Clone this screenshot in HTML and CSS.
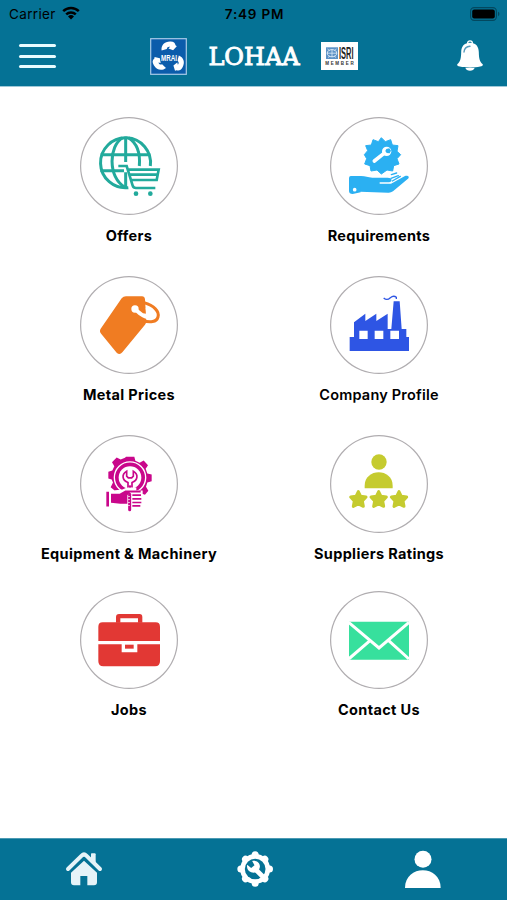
FILE: index.html
```html
<!DOCTYPE html>
<html lang="en">
<head>
    <meta charset="UTF-8">
    <meta name="viewport" content="width=device-width, initial-scale=1.0">
    <title>LOHAA</title>
    <link rel="stylesheet" href="styles.css">
</head>
<body>
    <header class="header">
        <div class="status">
            <div class="carrier">
                <span>Carrier</span>
                <svg class="wifi" viewBox="0 0 18 14">
                    <path d="M1.2 5.2a11.2 11.2 0 0 1 15.6 0M4.2 8.3a7 7 0 0 1 9.6 0" fill="none" stroke="#000" stroke-width="2.5"/>
                    <path d="M9 13.5l-3-3.1a4.3 4.3 0 0 1 6 0z"/>
                </svg>
            </div>
            <span class="time">7:49 PM</span>
            <svg class="battery" viewBox="0 0 30 14">
                <rect x=".6" y=".6" width="25.8" height="12.8" rx="3.6" fill="none" stroke="#03485f" stroke-width="1.1"/>
                <rect x="2.2" y="2.4" width="22.6" height="9.2" rx="2"/>
                <path d="M28 4.8a2.4 2.4 0 0 1 0 4.4z" fill="#03485f"/>
            </svg>
        </div>
        <nav class="nav">
            <div class="menu"><span></span><span></span><span></span></div>
            <div class="brand">
                <svg class="mrai" viewBox="0 0 37 37">
                    <rect x=".7" y=".7" width="35.6" height="35.6" fill="#0b5cab" stroke="#a9cbe8" stroke-width="1.2"/>
                    <g fill="#fff">
                        <path d="M11.6 12.6C10.8 7 14.5 3.6 20 3.4c3.5-.2 5.2 1.4 5.5 3.8l1.3 1-3.7 4-4.6-1.8 1.6-1.6c-2-.3-3 .4-3.3 2.3z"/>
                        <path d="M11.6 12.6C10.8 7 14.5 3.6 20 3.4c3.5-.2 5.2 1.4 5.5 3.8l1.3 1-3.7 4-4.6-1.8 1.6-1.6c-2-.3-3 .4-3.3 2.3z" transform="rotate(120 18.8 20)"/>
                        <path d="M11.6 12.6C10.8 7 14.5 3.6 20 3.4c3.5-.2 5.2 1.4 5.5 3.8l1.3 1-3.7 4-4.6-1.8 1.6-1.6c-2-.3-3 .4-3.3 2.3z" transform="rotate(240 18.8 20)"/>
                    </g>
                    <text x="11" y="22.6" textLength="16" lengthAdjust="spacingAndGlyphs" class="mrai-text">MRAI</text>
                </svg>
                <h1 class="title">LOHAA</h1>
                <svg class="isri" viewBox="0 0 37 28">
                    <rect width="37" height="28" fill="#fff"/>
                    <rect x="5" y="5.3" width="12" height="11.7" fill="#5d92c6"/>
                    <ellipse cx="11" cy="11.2" rx="4.8" ry="3.6" fill="none" stroke="#dcebf7"/>
                    <path d="M6 11.2h10M11 7.6v7.2M6.5 7l2 1.5M15.5 7l-2 1.5M7 15.5l2-1.5M15 15.5l-2-1.5" stroke="#dcebf7" stroke-width=".8"/>
                    <text x="18" y="17" textLength="14.5" lengthAdjust="spacingAndGlyphs" class="isri-text">ISRI</text>
                    <text x="4.2" y="22.8" textLength="28.5" class="isri-sub">MEMBER</text>
                </svg>
            </div>
            <svg class="bell" viewBox="0 0 26 32">
                <circle cx="13" cy="3.2" r="2.4" fill="none" stroke="#fff" stroke-width="1.3"/>
                <path d="M13 2.8c6 0 8.6 3.8 8.8 9.2.2 6 .5 9.6 4 12.2.3 1.6-1.2 2-2.6 2.3-6 1.2-14.4 1.2-20.4 0C1.4 26.2-.1 25.8.2 24.2c3.5-2.6 3.8-6.2 4-12.2C4.4 6.600 7 2.800 13 2.800z" fill="#fff"/>
                <path d="M8.3 27.8c.9 3.900 8.500 3.900 9.400 0z" fill="#fff"/>
                <path d="M7 12c.3-3.3 2.4-5.6 6-5.8" fill="none" stroke="#5a9dbd" stroke-width="1.4" stroke-linecap="round"/>
            </svg>
        </nav>
    </header>

    <main class="grid">
        <a class="item">
            <svg class="icon" viewBox="30 21 294 294">
                <g fill="none" stroke="#22aa9c" stroke-width="9">
                    <path d="M241 168a75 75 0 1 0-66 65"/>
                    <path d="M167 80v76M167 187v46M92 134h149M91 182h71"/>
                    <path d="M158 83C116 108 113 197 164 232M175 83c28 17 36 50 33 85"/>
                    <path d="M145 168h25l18 59q2 7 10 7h58M175 179h91l-6 31h-74M180 194h83" stroke-width="8"/>
                </g>
                <circle cx="198" cy="251" r="7" fill="#22aa9c"/>
                <circle cx="241" cy="251" r="7" fill="#22aa9c"/>
            </svg>
            <span class="label">Offers</span>
        </a>
        <a class="item">
            <svg class="icon" viewBox="30 21 294 294">
                <path d="M184 83l12 12 16-6 5 16 17 2-3 17 11 10-11 12 6 16-16 5-3 16-17-3-17 12-13-12-18 3-3-16-16-5 6-16-7-12 10-12-6-15 17-2 5-16 16 6z" fill="#2bb0f2" stroke="#2bb0f2" stroke-width="3" stroke-linejoin="round"/>
                <path d="M163 153l29-23" stroke="#fff" stroke-width="11" stroke-linecap="round"/>
                <circle cx="200" cy="124" r="14" fill="#fff"/>
                <path d="M199 117l9-2 5 7-4 8-9-1-4-6z" fill="#2bb0f2"/>
                <path d="M92 198h31c14 0 20 4 34 5h46c14 0 16 11 4 14h-28v4h34l42-23c8-3 16 3 8 9l-44 37q-7 5-15 4l-83-3-24 4-5-25z" fill="#2bb0f2"/>
                <path d="M87 203q0-5 6-5h24l5 49-24 5q-11 0-11-9z" fill="#2bb0f2"/>
                <path d="M213 205l22-8M217 213l24-14M214 194l16-5" stroke="#2bb0f2" stroke-width="4" stroke-linecap="round"/>
                <circle cx="104" cy="239" r="5.5" fill="#fff"/>
            </svg>
            <span class="label">Requirements</span>
        </a>
        <a class="item">
            <svg class="icon" viewBox="30 18 294 294">
                <path d="M168 79h48q8 0 9 9l4 64q0 7-4 12l-68 83q-8 9-17 1l-46-56q-7-8-2-16l63-91q5-6 13-6z" fill="#f07c22"/>
                <path d="M222 98c30 9 47 26 42 43-4 15-24 18-46 10" fill="none" stroke="#f07c22" stroke-width="9"/>
                <circle cx="195" cy="117" r="11" fill="#fff"/>
                <path d="M196 125c12 15 41 28 52 22 9-7 1-20-21-33l2 17-10-1-16-13z" fill="#fff"/>
            </svg>
            <span class="label">Metal Prices</span>
        </a>
        <a class="item">
            <svg class="icon" viewBox="60 18 294 294">
                <path d="M119 201h13v-44l34-26v22l33-22v22l34-22v46h11l7-83h18l6 83h14v24h8v42H119z" fill="#2e55e4"/>
                <path d="M148 182h25v25h-25zM194 182h26v25h-26zM241 182h26v25h-26z" fill="#fff"/>
                <path d="M221 84q10 9 20-1 10-8 18-1v5" fill="none" stroke="#2e55e4" stroke-width="4"/>
            </svg>
            <span class="label company">Company Profile</span>
        </a>
        <a class="item">
            <svg class="icon" viewBox="151 13.5 294 294">
                <path d="M289 79h25l3 12 13 6 12-7 13 14-7 11 5 14 13 3v20l-13 4-4 13 7 12-10 12-13-5-8 4h-54l-20-5 3-8-11-9 7-14-4-9-10-3v-20l12-4 6-13-7-12 14-14 12 6 13-5z" fill="#c9078b"/>
                <circle cx="301" cy="141" r="47" fill="none" stroke="#fff" stroke-width="4"/>
                <circle cx="301" cy="141" r="34" fill="#fff"/>
                <path d="M291 122c-16 9-14 28 4 34v20h12v-20c18-6 20-25 4-34v15l-5 5h-10l-5-5z" fill="#fff" stroke="#c9078b" stroke-width="5"/>
                <path d="M226 181h16l36-4q15-8 30-6h12v9h19v62h-46l-57-7h-10z" fill="#fff"/>
                <circle cx="301" cy="168" r="4" fill="#c9078b"/>
                <path d="M230 184h8v44h-8zM244 190h26l17-10h46v6h-32l-8 8v26h-21l-28-3z" fill="#c9078b"/>
                <path d="M300 191v47" stroke="#c9078b" stroke-width="9" stroke-linecap="round"/>
                <path d="M296 198h4M296 207h4M296 216h4M296 225h4" stroke="#fff" stroke-width="3"/>
                <path d="M308 194h26M308 205h27M308 216h27M308 226h24" stroke="#c9078b" stroke-width="5"/>
            </svg>
            <span class="label">Equipment &amp; Machinery</span>
        </a>
        <a class="item">
            <svg class="icon" viewBox="90 14 294 294">
                <g fill="#c5cb2f" stroke="#c5cb2f" stroke-linejoin="round">
                    <circle cx="237" cy="95" r="23" stroke="none"/>
                    <path d="M194 174v-8c0-54 84-54 84 0v8z" stroke="none"/>
                    <path d="M175 184l7 14 16 2-11 12 3 16-15-7-15 7 3-16-11-12 16-2z" stroke-width="9"/>
                    <path d="M236 184l7 14 16 2-11 12 3 16-15-7-15 7 3-16-11-12 16-2z" stroke-width="9"/>
                    <path d="M297 184l7 14 16 2-11 12 3 16-15-7-15 7 3-16-11-12 16-2z" stroke-width="9"/>
                </g>
            </svg>
            <span class="label">Suppliers Ratings</span>
        </a>
        <a class="item">
            <svg class="icon" viewBox="30 17 294 294">
                <path d="M138 112V95q0-9 9-9h62q8 0 8 9v17h-13V99h-53v13z" fill="#e23834"/>
                <path d="M98 111h159q13 0 13 13v43H85v-43q0-13 13-13z" fill="#e23834"/>
                <path d="M85 177h70v24h47v-24h68v51q0 15-15 15H100q-15 0-15-15z" fill="#e23834"/>
                <path d="M165 178h26v12h-26z" fill="#e23834"/>
            </svg>
            <span class="label">Jobs</span>
        </a>
        <a class="item">
            <svg class="icon" viewBox="30 17 294 294">
                <path d="M87 109h180v114H87z" fill="#37e09d"/>
                <path d="M86 111l91 77 90-77M86 221l64-55M267 221l-61-55" fill="none" stroke="#fff" stroke-width="9"/>
            </svg>
            <span class="label">Contact Us</span>
        </a>
    </main>

    <footer class="tabs">
        <svg class="tab" viewBox="180 45 144 144">
            <path d="M204 117l41-40q7-7 14 0l41 40" fill="none" stroke="#e6f3f8" stroke-width="12" stroke-linecap="round"/>
            <path d="M273 72q0-2 2-2h9q3 0 3 3v30l-14-13z" fill="#e6f3f8"/>
            <path d="M252 92l39 36v29q0 9-9 9h-20v-28h-21v28h-19q-9 0-9-9v-29z" fill="#e6f3f8"/>
        </svg>
        <svg class="tab" viewBox="688.5 45 144 144">
            <circle cx="764" cy="117" r="45" fill="#fff"/>
            <path d="M764 74v86M721 117h86M735 88l58 58M735 146l58-58" stroke="#fff" stroke-width="21" stroke-linecap="round"/>
            <circle cx="764" cy="117" r="31" fill="#057295"/>
            <path d="M764 117l30 30" stroke="#fff" stroke-width="14"/>
            <path d="M755 93c14-3 25 7 23 19-2 13-15 19-26 15-10-3-14-13-12-23l12 10 10-8z" fill="#fff"/>
        </svg>
        <svg class="tab" viewBox="1197 45 144 144">
            <circle cx="1269" cy="88" r="25.5" fill="#fff"/>
            <path d="M1215 174c0-71 107-71 107 0z" fill="#fff"/>
        </svg>
    </footer>
</body>
</html>
```
FILE: styles.css
```css
* {
    box-sizing: border-box;
}
body {
    margin: 0;
    height: 900px;
    display: flex;
    flex-direction: column;
    background-color: #fff;
    font-family: Inter, "Liberation Sans", sans-serif;
    color: #000;
}
svg {
    display: block;
    flex-shrink: 0;
    overflow: visible;
}
.header {
    height: 87px;
    background-color: #057295;
    border-bottom: 1px solid #9fc9d8;
}
.status {
    height: 26px;
    padding: 1px 7px 0 9px;
    display: grid;
    grid-template-columns: 1fr auto 1fr;
    align-items: center;
    font-size: 13.5px;
}
.carrier {
    display: flex;
    align-items: center;
    gap: 6px;
    letter-spacing: 0.35px;
}
.wifi {
    width: 18px;
    height: 14px;
    margin-top: -2px;
}
.time {
    font-weight: 600;
    letter-spacing: 0.8px;
}
.battery {
    width: 30px;
    height: 14px;
    justify-self: end;
}
.nav {
    height: 60px;
    padding: 0 24px 0 19px;
    display: flex;
    align-items: center;
}
.menu {
    width: 37px;
    display: flex;
    flex-direction: column;
    gap: 7.5px;
}
.menu span {
    height: 3px;
    border-radius: 2px;
    background-color: #e8fbff;
}
.brand {
    margin-left: 94px;
    width: 208px;
    display: flex;
    align-items: center;
    justify-content: space-between;
}
.mrai {
    width: 37px;
    height: 37px;
}
.mrai-text {
    font: bold 9px "Liberation Sans", sans-serif;
    fill: #fff;
    stroke: #0b5cab;
    stroke-width: 1px;
    paint-order: stroke;
}
.title {
    margin: 0;
    padding-top: 2px;
    font: normal 24px/30px "DejaVu Serif", serif;
    color: #fff;
    -webkit-text-stroke: 0.9px #fff;
}
.isri {
    width: 37px;
    height: 28px;
}
.isri-text {
    font: bold 16px "Liberation Sans", sans-serif;
    fill: #222;
}
.isri-sub {
    font: bold 4.5px "Liberation Sans", sans-serif;
    fill: #333;
}
.bell {
    width: 26px;
    height: 32px;
    margin-left: auto;
}
.grid {
    flex: 1;
    padding: 30px 3px 0 4px;
    display: grid;
    grid-template-columns: 250px 250px;
    grid-template-rows: 159px 158.5px 156.5px 140px;
}
.item {
    display: flex;
    flex-direction: column;
    align-items: center;
}
.icon {
    width: 98px;
    height: 98px;
    border-radius: 50%;
    box-shadow: inset 0 0 0 1.2px #b0adb0;
}
.label {
    margin-top: 11px;
    font-size: 14.5px;
    font-weight: 650;
    line-height: 20px;
    letter-spacing: 0.35px;
}
.company {
    font-weight: 600;
    letter-spacing: 0.2px;
}
.tabs {
    height: 62px;
    padding: 6px 60px 0;
    display: flex;
    justify-content: space-between;
    background-color: #057295;
    border-top: 1px solid #4b9ab3;
}
.tab {
    width: 48px;
    height: 48px;
}
```
